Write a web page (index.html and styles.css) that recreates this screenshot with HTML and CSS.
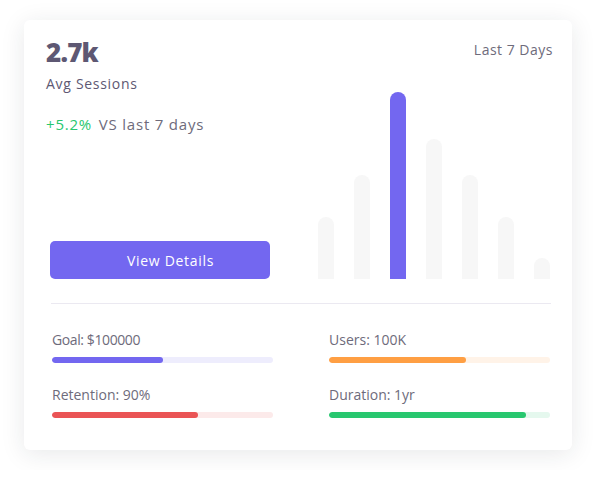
FILE: index.html
```html
<!DOCTYPE html>
<html>
<head>
<meta charset="utf-8">
<link rel="stylesheet" href="styles.css">
</head>
<body>
<div class="card">
  <div class="top">
    <div class="left">
      <div class="value">2.7k</div>
      <div class="subtitle">Avg Sessions</div>
      <div class="change"><span class="up">+5.2%</span> VS last 7 days</div>
      <button class="btn">View Details</button>
    </div>
    <div class="right">
      <div class="period">Last 7 Days</div>
      <div class="chart">
        <div class="bar" style="height:62px"></div>
        <div class="bar" style="height:104px"></div>
        <div class="bar active" style="height:187px"></div>
        <div class="bar" style="height:140px"></div>
        <div class="bar" style="height:104px"></div>
        <div class="bar" style="height:62px"></div>
        <div class="bar" style="height:21px"></div>
      </div>
    </div>
  </div>
  <div class="divider"></div>
  <div class="stats">
    <div class="stat">
      <div class="label goal">Goal: $100000</div>
      <div class="track purple"><div class="fill" style="width:50%"></div></div>
    </div>
    <div class="stat">
      <div class="label">Users: 100K</div>
      <div class="track orange"><div class="fill" style="width:62%"></div></div>
    </div>
    <div class="stat">
      <div class="label">Retention: 90%</div>
      <div class="track red"><div class="fill" style="width:66%"></div></div>
    </div>
    <div class="stat">
      <div class="label">Duration: 1yr</div>
      <div class="track green"><div class="fill" style="width:89%"></div></div>
    </div>
  </div>
</div>
</body>
</html>
```

FILE: styles.css
```css
* { box-sizing: border-box; }
html, body { margin: 0; background: #fff; }
body {
  padding: 20px 24px;
  font-family: "Open Sans", "Noto Sans", sans-serif;
  color: #6e6b7b;
}
.card {
  width: 548px;
  height: 430px;
  background: #fff;
  border-radius: 6px;
  box-shadow: 0 4px 24px 0 rgba(34, 41, 47, 0.1);
  padding-top: 16px;
}
.top {
  display: flex;
  justify-content: space-between;
  height: 243px;
  padding: 0 22px 0 22px;
}
.left {
  display: flex;
  flex-direction: column;
  width: 224px;
}
.value {
  font-size: 26px;
  line-height: 32px;
  font-weight: 800;
  letter-spacing: -0.8px;
  color: #5e5873;
}
.subtitle {
  margin-top: 6px;
  font-size: 14px;
  line-height: 20px;
  font-weight: 500;
  letter-spacing: 0.7px;
  color: #5e5873;
}
.change {
  margin-top: 19.6px;
  font-size: 15px;
  line-height: 20px;
  letter-spacing: 0.8px;
  color: #6e6b7b;
}
.up { color: #28c76f; margin-right: 2px; }
.btn {
  margin-top: auto;
  margin-left: 4px;
  width: 220px;
  height: 38px;
  border: 0;
  border-radius: 5px;
  background: #7367f0;
  color: #fff;
  font-family: inherit;
  font-size: 14px;
  font-weight: 500;
  letter-spacing: 0.7px;
  padding: 0 0 0 21px;
}
.right {
  display: flex;
  flex-direction: column;
  align-items: flex-end;
}
.period {
  margin-top: 4px;
  margin-right: -3px;
  font-size: 14px;
  line-height: 20px;
  letter-spacing: 0.5px;
  color: #6e6b7b;
}
.chart {
  flex: 1;
  display: flex;
  align-items: flex-end;
  gap: 20px;
}
.bar {
  width: 16px;
  background: #f7f7f7;
  border-radius: 8px 8px 0 0;
}
.bar.active { background: #7367f0; }
.divider {
  height: 1px;
  background: #ebe9f1;
  margin: 24px 21px 0 27px;
}
.stats {
  display: grid;
  grid-template-columns: 221px 221px;
  column-gap: 56px;
  row-gap: 21.6px;
  margin: 25.6px 22px 0 28px;
}
.label {
  font-size: 14px;
  line-height: 20px;
  color: #6e6b7b;
}
.label.goal { letter-spacing: -0.4px; }
.track {
  margin-top: 7.4px;
  height: 6px;
  border-radius: 3px;
  overflow: hidden;
}
.fill { height: 100%; border-radius: 3px; }
.purple { background: #eeedfd; }
.purple .fill { background: #7367f0; }
.orange { background: #fff3e8; }
.orange .fill { background: #ff9f43; }
.red { background: #fceaea; }
.red .fill { background: #ea5455; }
.green { background: #e5f8ee; }
.green .fill { background: #28c76f; }
```
